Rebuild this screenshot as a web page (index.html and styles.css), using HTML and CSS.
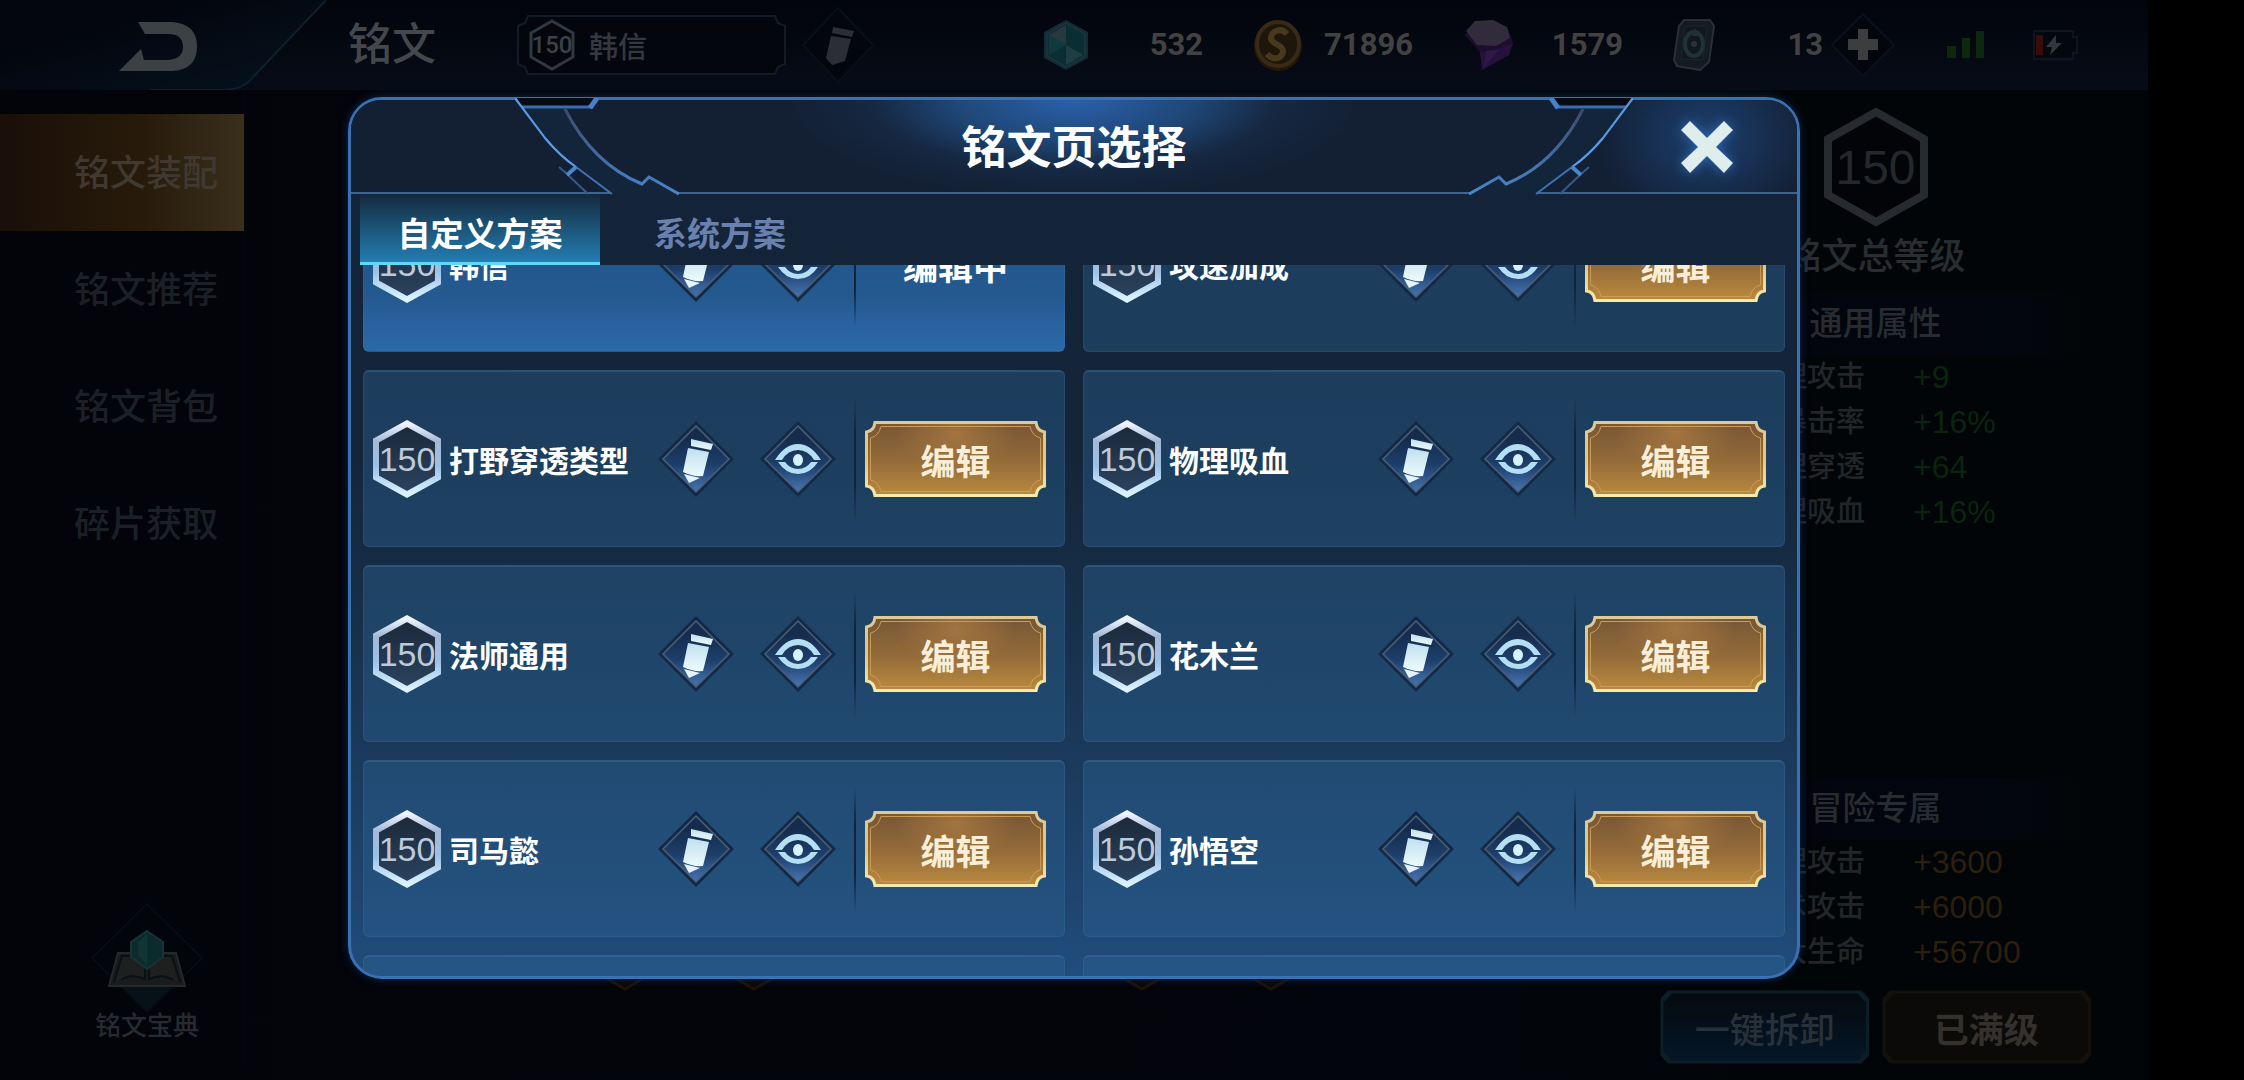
FILE: index.html
```html
<!DOCTYPE html>
<html lang="zh-CN">
<head>
    <meta charset="UTF-8">
    <meta name="viewport" content="width=device-width, initial-scale=1.0">
    <title>铭文</title>
    <link rel="stylesheet" href="styles.css">
</head>
<body>
    <!-- Shared shapes -->
    <svg class="defs" width="0" height="0" aria-hidden="true">
        <defs>
            <linearGradient id="hexStroke" x1="0" y1="0" x2="0" y2="1">
                <stop offset="0" stop-color="#f0f6ff"/>
                <stop offset=".25" stop-color="#a4b8d6"/>
                <stop offset=".6" stop-color="#9cc0e8"/>
                <stop offset="1" stop-color="#dcf4ff"/>
            </linearGradient>
            <linearGradient id="hexFill" x1="0" y1="0" x2="0" y2="1">
                <stop offset="0" stop-color="#1b2839"/>
                <stop offset="1" stop-color="#2b4460"/>
            </linearGradient>
            <linearGradient id="diamondFill" x1="0" y1="0" x2="0" y2="1">
                <stop offset=".2" stop-color="#162c4c"/>
                <stop offset=".6" stop-color="#1d3f6c"/>
                <stop offset="1" stop-color="#4676b4"/>
            </linearGradient>
            <linearGradient id="goldFill" x1="0" y1="0" x2="0" y2="1">
                <stop offset="0" stop-color="#775636"/>
                <stop offset=".5" stop-color="#926a38"/>
                <stop offset="1" stop-color="#bb8a40"/>
            </linearGradient>
            <linearGradient id="goldStroke" x1="0" y1="0" x2="0" y2="1">
                <stop offset="0" stop-color="#dccb98"/>
                <stop offset=".5" stop-color="#e2c682"/>
                <stop offset="1" stop-color="#f4eaae"/>
            </linearGradient>
            <radialGradient id="goldShine">
                <stop offset="0" stop-color="#b98446" stop-opacity=".6"/>
                <stop offset="1" stop-color="#b98446" stop-opacity="0"/>
            </radialGradient>
            <linearGradient id="iconFill" x1="0" y1="0" x2="0" y2="1">
                <stop offset="0" stop-color="#bfe0f0"/>
                <stop offset="1" stop-color="#eefafa"/>
            </linearGradient>
            <linearGradient id="lineFade" x1="0" y1="0" x2="0" y2="1">
                <stop offset="0" stop-color="#3c4a6c"/>
                <stop offset="1" stop-color="#4a86cc"/>
            </linearGradient>
            <linearGradient id="plateBlue" x1="0" y1="0" x2="0" y2="1">
                <stop offset="0" stop-color="#04090f"/>
                <stop offset="1" stop-color="#051727"/>
            </linearGradient>
            <linearGradient id="backFill" x1="0" y1="0" x2="1" y2="1">
                <stop offset=".3" stop-color="#03060e"/>
                <stop offset="1" stop-color="#06131f"/>
            </linearGradient>
        </defs>

        <symbol id="hex" viewBox="0 0 68 78">
            <path d="M34 3.500L65 20.500V57.500L34 74.500L3 57.500V20.500Z" fill="url(#hexFill)" stroke="url(#hexStroke)" stroke-width="6"/>
        </symbol>

        <symbol id="pencil" viewBox="0 0 76 76">
            <path d="M38 0L76 38L38 76L0 38Z" fill="#122a48"/>
            <path d="M38 5L71 38L38 71L5 38Z" fill="url(#diamondFill)" stroke="#4c5f76" stroke-width="1.500"/>
            <path d="M33 18L55 23L53 29L33 25Z" fill="url(#iconFill)"/>
            <path d="M30 27L51 31L45 55Q35 56 25 51Z" fill="url(#iconFill)"/>
            <path d="M26 53L42 57L31 62Z" fill="#e4f4fa"/>
        </symbol>

        <symbol id="eye" viewBox="0 0 76 76">
            <path d="M38 0L76 38L38 76L0 38Z" fill="#122a48"/>
            <path d="M38 5L71 38L38 71L5 38Z" fill="url(#diamondFill)" stroke="#4c5f76" stroke-width="1.500"/>
            <path d="M15 39Q25 23 38 23Q51 23 61 39L54 39Q48 29 38 29Q28 29 22 39Z" fill="#b4dff2"/>
            <path d="M18 41L25 41Q30 48 38 48Q46 48 51 41L58 41Q50 53 38 53Q26 53 18 41Z" fill="#b4dff2"/>
            <ellipse cx="38" cy="39" rx="5" ry="6" fill="#d6f2fc"/>
        </symbol>

        <symbol id="gold-plate" viewBox="0 0 182 76" preserveAspectRatio="none">
            <path d="M10 1.500H172Q173 10 180.500 11V65Q173 66 172 74.500H10Q9 66 1.500 65V11Q9 10 10 1.500Z" fill="url(#goldFill)"/>
            <ellipse cx="91" cy="12" rx="60" ry="40" fill="url(#goldShine)"/>
            <path d="M10 1.500H172Q173 10 180.500 11V65Q173 66 172 74.500H10Q9 66 1.500 65V11Q9 10 10 1.500Z" fill="none" stroke="url(#goldStroke)" stroke-width="3"/>
            <path d="M16 5.500H166Q168 15 176.500 17V59Q168 61 166 70.500H16Q14 61 5.500 59V17Q14 15 16 5.500Z" fill="none" stroke="#cf9c52" stroke-width="1"/>
        </symbol>

        <symbol id="plate" viewBox="0 0 210 76" preserveAspectRatio="none">
            <path d="M10 2H200L208 11V65L200 74H10L2 65V11Z" stroke-width="3"/>
            <path d="M10 2L2 11M200 2L208 11M208 65L200 74M10 74L2 65" stroke-width="5"/>
        </symbol>

        <!-- Cut in the dialog's top edge and the circuit lines below it -->
        <symbol id="corner" viewBox="0 0 180 97">
            <path d="M1 -1L8 9H76L83 -1Z" fill="#060a14"/>
            <path d="M8 9H50Q80 65 127 86L134 79L164 96H97L61 69Q30 45 8 9Z" fill="#12253a"/>
            <path d="M7 9H77" fill="none" stroke="#3a6cb0" stroke-width="3"/>
            <path d="M75 10L82 0" fill="none" stroke="#4682cc" stroke-width="5"/>
            <path d="M0 0L30 40Q45 58 61 69L97 96" fill="none" stroke="#3f72b4" stroke-width="2"/>
            <path d="M0 0L30 40Q45 58 61 69" fill="none" stroke="#5a9ae0" stroke-width="2"/>
            <path d="M50 11Q78 66 127 86L134 79L164 96" fill="none" stroke="url(#lineFade)" stroke-width="3"/>
            <path d="M44 69L52 76L73 96" fill="none" stroke="#345a8c" stroke-width="2"/>
            <path d="M61 69L52 77" fill="none" stroke="#4a86cc" stroke-width="4"/>
        </symbol>
    </svg>

    <div class="game">
        <header class="topbar">
            <button class="back" aria-label="返回">
                <svg viewBox="0 0 348 90">
                    <path d="M0 0H326L254 76Q244 90 222 90H0Z" fill="url(#backFill)"/>
                    <path d="M326 0L254 76Q244 90 222 90H150" fill="none" stroke="#0c212d" stroke-width="2"/>
                    <path d="M138 22H172Q197 24 197 46Q197 70 172 71H119L141 49L144 60H168Q183 59 183 47Q183 34 168 34H145Z" fill="#3c4145"/>
                </svg>
            </button>
            <h1>铭文</h1>
            <button class="page-picker">
                <svg class="page-picker-bg" viewBox="0 0 269 60" preserveAspectRatio="none" aria-hidden="true">
                    <path d="M11 1H258L261 8L268 11V49L261 52L258 59H11L8 52L1 49V11L8 8Z" fill="#03060d" stroke="#131c26" stroke-width="2"/>
                </svg>
                <span class="page-picker-text">
                    <span class="badge-small">
                        <svg viewBox="0 0 46 52"><path d="M23 2L44 14V38L23 50L2 38V14Z" fill="none" stroke="#32383f" stroke-width="3"/></svg>
                        <span>150</span>
                    </span>
                    韩信
                </span>
            </button>
            <button class="rename" aria-label="重命名">
                <svg viewBox="0 0 74 80">
                    <path d="M37 3L72 40L37 77L2 40Z" fill="#03060c" stroke="#090f17" stroke-width="2"/>
                    <path d="M32 22L53 26L51 32L31 28ZM30 31L50 34L44 56L31 60L25 53Z" fill="#2b2f34"/>
                </svg>
            </button>

            <ul class="resources">
                <li>
                    <svg viewBox="0 0 46 52">
                        <path d="M23 1L45 13V39L23 51L1 39V13Z" fill="#152a33"/>
                        <path d="M23 4L42 15V37L23 48L4 37V15Z" fill="#0b2e35" stroke="#233a42"/>
                        <path d="M23 6L23 26L6 16Z" fill="#25393f"/>
                        <path d="M6 16L23 26L6 36Z" fill="#0f3a3f"/>
                        <path d="M23 26L40 36L23 46Z" fill="#1e3e43"/>
                    </svg>
                    <span>532</span>
                </li>
                <li>
                    <svg viewBox="0 0 50 52">
                        <ellipse cx="25" cy="27" rx="24" ry="25" fill="#22180a"/>
                        <ellipse cx="25" cy="25" rx="21" ry="22" fill="#1d160b" stroke="#382a15" stroke-width="4"/>
                        <path d="M34 15Q28 8 20 14Q14 21 25 26Q34 31 27 38Q20 42 14 35" fill="none" stroke="#49391c" stroke-width="6"/>
                    </svg>
                    <span>71896</span>
                </li>
                <li>
                    <svg viewBox="0 0 50 52">
                        <path d="M1 15L17 33L19 51L46 36L50 24L44 8Z" fill="#1d0e30"/>
                        <path d="M17 33L34 30L50 24L46 36L19 51Z" fill="#25113b"/>
                        <path d="M23 32L36 31L20 50Z" fill="#2f1846"/>
                        <path d="M3 12L12 2L30 1L44 8L47 19L33 27L14 26Z" fill="#312b3c"/>
                    </svg>
                    <span>1579</span>
                </li>
                <li class="resource-cards">
                    <svg viewBox="0 0 42 52">
                        <path d="M11 1H37L41 7L36 43L27 51L4 47L1 41L6 7Z" fill="#141b22" stroke="#282f36" stroke-width="2"/>
                        <path d="M12 7L34 7L30 41L8 40Z" fill="#111820" stroke="#1c252d"/>
                        <ellipse cx="21" cy="25" rx="9" ry="12" fill="none" stroke="#203235" stroke-width="4"/>
                        <path d="M22 9L25 17H19Z" fill="#203235"/>
                        <circle cx="21" cy="25" r="3" fill="#26333e"/>
                    </svg>
                    <span>13</span>
                </li>
            </ul>
            <button class="add" aria-label="增加">
                <svg viewBox="0 0 64 64">
                    <path d="M32 1L63 32L32 63L1 32Z" fill="#03070d" stroke="#0b1119" stroke-width="2"/>
                    <path d="M27 16H37V26H47V37H37V47H27V37H17V26H27Z" fill="#3c3d3e"/>
                </svg>
            </button>
            <svg class="signal" viewBox="0 0 38 28">
                <path d="M0 15H9V27H0ZM15 7H23V27H15ZM29 0H37V27H29Z" fill="#0c2910"/>
            </svg>
            <svg class="battery" viewBox="0 0 46 30">
                <path d="M1 1H40V7H44V23H40V29H1Z" fill="#03070e" stroke="#0e141c" stroke-width="2"/>
                <path d="M3 5H10V25H3Z" fill="#370c0a"/>
                <path d="M23 5L13 17H19L17 25L29 13H23Z" fill="#33363b"/>
            </svg>
        </header>

        <aside class="sidebar">
            <nav>
                <a class="active" href="#">铭文装配</a>
                <a href="#">铭文推荐</a>
                <a href="#">铭文背包</a>
                <a href="#">碎片获取</a>
            </nav>
            <a class="codex" href="#">
                <svg viewBox="0 0 112 110">
                    <path d="M56 1L111 55L56 109L1 55Z" fill="#02050a" stroke="#070c12" stroke-width="2"/>
                    <path d="M30 83H82L56 108Z" fill="#07111a"/>
                    <path d="M27 50H85L94 83H18Z" fill="#191b1d" stroke="#24292c" stroke-width="2"/>
                    <path d="M23 79L31 53H54V76Q40 70 30 77M89 79L81 53H58V76Q72 70 82 77" fill="#1e1f1f" stroke="#0b1015" stroke-width="2"/>
                    <path d="M56 28L72 39V54L56 66L40 54V39Z" fill="#0b2b2d" stroke="#1a3235" stroke-width="2"/>
                    <path d="M56 30L47 40V52L56 62Z" fill="#123636"/>
                </svg>
                铭文宝典
            </a>
        </aside>

        <main class="board">
            <div class="slots">
                <svg viewBox="0 0 46 52"><path d="M23 2L44 14V38L23 50L2 38V14Z"/></svg>
                <svg viewBox="0 0 46 52"><path d="M23 2L44 14V38L23 50L2 38V14Z"/></svg>
                <svg class="slot-empty" viewBox="0 0 46 52"><path d="M23 2L44 14V38L23 50L2 38V14Z"/></svg>
                <svg class="slot-empty" viewBox="0 0 46 52"><path d="M23 2L44 14V38L23 50L2 38V14Z"/></svg>
                <svg viewBox="0 0 46 52"><path d="M23 2L44 14V38L23 50L2 38V14Z"/></svg>
                <svg viewBox="0 0 46 52"><path d="M23 2L44 14V38L23 50L2 38V14Z"/></svg>
            </div>
        </main>

        <section class="stats">
            <div class="level">
                <svg viewBox="0 0 104 120"><path d="M52 5L100 32V88L52 115L4 88V32Z" fill="#020408" stroke="#262b30" stroke-width="8"/></svg>
                <span>150</span>
            </div>
            <h2>铭文总等级</h2>
            <h3>通用属性</h3>
            <dl class="stat-list green">
                <dt>物理攻击</dt><dd>+9</dd>
                <dt>暴击率</dt><dd>+16%</dd>
                <dt>物理穿透</dt><dd>+64</dd>
                <dt>物理吸血</dt><dd>+16%</dd>
            </dl>
            <h3 class="adventure">冒险专属</h3>
            <dl class="stat-list orange">
                <dt>物理攻击</dt><dd>+3600</dd>
                <dt>法术攻击</dt><dd>+6000</dd>
                <dt>最大生命</dt><dd>+56700</dd>
            </dl>
            <div class="stats-actions">
                <button class="plate-btn plate-blue"><svg aria-hidden="true"><use href="#plate"/></svg><span>一键拆卸</span></button>
                <button class="plate-btn plate-brown"><svg aria-hidden="true"><use href="#plate"/></svg><span>已满级</span></button>
            </div>
        </section>

        <!-- Page selection dialog -->
        <div class="overlay">
            <section class="modal" role="dialog" aria-labelledby="modalTitle">
                <header class="modal-header">
                    <h2 id="modalTitle">铭文页选择</h2>
                    <button class="close" aria-label="关闭">
                        <svg viewBox="0 0 54 54"><path d="M10 1L27 18L44 1L53 10L36 27L53 43L44 53L27 36L10 53L1 43L18 27L1 10Z" fill="#dfeeed"/></svg>
                    </button>
                </header>
                <svg class="corner corner-left" aria-hidden="true"><use href="#corner"/></svg>
                <svg class="corner corner-right" aria-hidden="true"><use href="#corner"/></svg>
                <div class="tabs" role="tablist">
                    <button class="tab active" role="tab" aria-selected="true">自定义方案</button>
                    <button class="tab" role="tab" aria-selected="false">系统方案</button>
                </div>
                <div class="page-list" id="pageList">
                    <article class="card current">
                        <div class="badge"><svg><use href="#hex"/></svg><span>150</span></div>
                        <h3>韩信</h3>
                        <button class="icon-btn" aria-label="重命名"><svg><use href="#pencil"/></svg></button>
                        <button class="icon-btn" aria-label="查看"><svg><use href="#eye"/></svg></button>
                        <div class="card-action"><strong>编辑中</strong></div>
                    </article>
                    <article class="card">
                        <div class="badge"><svg><use href="#hex"/></svg><span>150</span></div>
                        <h3>攻速加成</h3>
                        <button class="icon-btn" aria-label="重命名"><svg><use href="#pencil"/></svg></button>
                        <button class="icon-btn" aria-label="查看"><svg><use href="#eye"/></svg></button>
                        <div class="card-action"><button class="edit-btn"><svg aria-hidden="true"><use href="#gold-plate"/></svg><span>编辑</span></button></div>
                    </article>
                    <article class="card">
                        <div class="badge"><svg><use href="#hex"/></svg><span>150</span></div>
                        <h3>打野穿透类型</h3>
                        <button class="icon-btn" aria-label="重命名"><svg><use href="#pencil"/></svg></button>
                        <button class="icon-btn" aria-label="查看"><svg><use href="#eye"/></svg></button>
                        <div class="card-action"><button class="edit-btn"><svg aria-hidden="true"><use href="#gold-plate"/></svg><span>编辑</span></button></div>
                    </article>
                    <article class="card">
                        <div class="badge"><svg><use href="#hex"/></svg><span>150</span></div>
                        <h3>物理吸血</h3>
                        <button class="icon-btn" aria-label="重命名"><svg><use href="#pencil"/></svg></button>
                        <button class="icon-btn" aria-label="查看"><svg><use href="#eye"/></svg></button>
                        <div class="card-action"><button class="edit-btn"><svg aria-hidden="true"><use href="#gold-plate"/></svg><span>编辑</span></button></div>
                    </article>
                    <article class="card">
                        <div class="badge"><svg><use href="#hex"/></svg><span>150</span></div>
                        <h3>法师通用</h3>
                        <button class="icon-btn" aria-label="重命名"><svg><use href="#pencil"/></svg></button>
                        <button class="icon-btn" aria-label="查看"><svg><use href="#eye"/></svg></button>
                        <div class="card-action"><button class="edit-btn"><svg aria-hidden="true"><use href="#gold-plate"/></svg><span>编辑</span></button></div>
                    </article>
                    <article class="card">
                        <div class="badge"><svg><use href="#hex"/></svg><span>150</span></div>
                        <h3>花木兰</h3>
                        <button class="icon-btn" aria-label="重命名"><svg><use href="#pencil"/></svg></button>
                        <button class="icon-btn" aria-label="查看"><svg><use href="#eye"/></svg></button>
                        <div class="card-action"><button class="edit-btn"><svg aria-hidden="true"><use href="#gold-plate"/></svg><span>编辑</span></button></div>
                    </article>
                    <article class="card">
                        <div class="badge"><svg><use href="#hex"/></svg><span>150</span></div>
                        <h3>司马懿</h3>
                        <button class="icon-btn" aria-label="重命名"><svg><use href="#pencil"/></svg></button>
                        <button class="icon-btn" aria-label="查看"><svg><use href="#eye"/></svg></button>
                        <div class="card-action"><button class="edit-btn"><svg aria-hidden="true"><use href="#gold-plate"/></svg><span>编辑</span></button></div>
                    </article>
                    <article class="card">
                        <div class="badge"><svg><use href="#hex"/></svg><span>150</span></div>
                        <h3>孙悟空</h3>
                        <button class="icon-btn" aria-label="重命名"><svg><use href="#pencil"/></svg></button>
                        <button class="icon-btn" aria-label="查看"><svg><use href="#eye"/></svg></button>
                        <div class="card-action"><button class="edit-btn"><svg aria-hidden="true"><use href="#gold-plate"/></svg><span>编辑</span></button></div>
                    </article>
                    <article class="card"></article>
                    <article class="card"></article>
                </div>
            </section>
        </div>
    </div>

    <script>
        // Open the list half a row down, with the current page still in view
        document.getElementById('pageList').scrollTop = 90;
    </script>
</body>
</html>
```
FILE: styles.css
```css
* {
    box-sizing: border-box;
}

body {
    margin: 0;
    background: #000;
    color: #fff;
    font-family: "Liberation Sans", "Noto Sans CJK SC", sans-serif;
}

h1, h2, h3, ul, dl, dd {
    margin: 0;
    padding: 0;
    font-weight: 500;
}

button {
    margin: 0;
    padding: 0;
    border: none;
    background: none;
    color: inherit;
    font-family: inherit;
    cursor: pointer;
}

a {
    color: inherit;
    text-decoration: none;
}

svg {
    display: block;
}

.defs {
    position: absolute;
}

.game {
    position: relative;
    display: grid;
    grid-template-columns: 245px 1fr 431px;
    grid-template-rows: 90px 1fr;
    height: 100vh;
    min-height: 900px;
    margin-right: 96px;
    padding-right: 57px;
    background: linear-gradient(90deg, #02040a, #02050b 70%, #010507 85%);
}

/* Top bar */
.topbar {
    grid-column: 1 / -1;
    display: flex;
    align-items: center;
    margin-right: -57px;
    padding-right: 69px;
    background: linear-gradient(#02040b, #060c17);
    border-bottom: 1px solid #080f18;
}

.back svg {
    width: 348px;
    height: 90px;
}

.topbar h1 {
    font-size: 44px;
    line-height: 60px;
    color: #44484d;
}

.page-picker {
    display: grid;
    width: 269px;
    height: 60px;
    margin-left: 81px;
    font-size: 29px;
    font-weight: 500;
    color: #34393f;
}

.page-picker > * {
    grid-area: 1 / 1;
}

.page-picker-bg {
    width: 100%;
    height: 60px;
}

.page-picker-text {
    display: flex;
    align-items: center;
    gap: 14px;
    padding-left: 12px;
}

.badge-small {
    display: grid;
    place-items: center;
    font-family: Roboto, sans-serif;
    font-size: 24px;
    color: #3c4147;
}

.badge-small > * {
    grid-area: 1 / 1;
}

.badge-small svg {
    width: 46px;
}

.rename {
    margin-left: 15px;
}

.rename svg {
    width: 74px;
    height: 80px;
}

.resources {
    display: flex;
    gap: 50px;
    margin-left: auto;
    list-style: none;
    font-family: Roboto, sans-serif;
    font-size: 31px;
    font-weight: 700;
    color: #434242;
}

.resources li {
    display: flex;
    align-items: center;
    justify-content: space-between;
    width: 160px;
}

.resources svg {
    height: 52px;
}

.resources .resource-cards {
    width: 150px;
}

.add {
    margin-left: 8px;
}

.add svg {
    width: 64px;
}

.signal {
    width: 38px;
    margin-left: 52px;
}

.battery {
    width: 46px;
    margin-left: 48px;
}

/* Left menu */
.sidebar {
    display: flex;
    flex-direction: column;
    margin-bottom: 17px;
    padding: 24px 0;
    border-right: 1px solid #04080e;
}

.sidebar nav a {
    display: block;
    padding: 2px 0 0 74px;
    font-size: 36px;
    font-weight: 500;
    line-height: 115px;
    color: #1b2026;
}

.sidebar nav .active {
    background: linear-gradient(90deg, #1a0f08, #281b0b 60%, #3a2f1b);
    color: #3f3931;
}

.codex {
    display: flex;
    flex-direction: column;
    align-items: center;
    align-self: flex-start;
    margin-top: auto;
    padding-left: 91px;
    font-size: 26px;
    font-weight: 500;
    line-height: 26px;
    color: #272b31;
}

.codex svg {
    width: 112px;
}

/* Rune board behind the dialog */
.board {
    display: flex;
    align-items: flex-end;
    padding: 0 366px 89px 357px;
}

.slots {
    display: flex;
    flex: 1;
    justify-content: space-between;
}

.slots svg {
    width: 46px;
    fill: #0a0603;
    stroke: #201205;
    stroke-width: 3;
}

.slots .slot-empty {
    fill: none;
    stroke: none;
}

/* Attributes */
.stats {
    display: flex;
    flex-direction: column;
    padding: 17px 0 16px;
    text-align: center;
}

.level {
    display: grid;
    place-items: center;
    font-size: 48px;
    color: #24282d;
}

.level > * {
    grid-area: 1 / 1;
}

.level svg {
    width: 104px;
}

.stats h2 {
    padding-top: 2px;
    font-size: 36px;
    line-height: 56px;
    color: #282d32;
}

.stats h3 {
    margin-top: 8px;
    background: linear-gradient(90deg, #02040b, #03060f 75%, transparent);
    font-size: 33px;
    line-height: 62px;
    color: #272c31;
}

.stats .adventure {
    margin-top: auto;
}

.stat-list {
    display: grid;
    grid-template-columns: 205px 1fr;
    column-gap: 48px;
    line-height: 45px;
}

.stat-list dt {
    font-size: 29px;
    text-align: right;
    color: #212629;
}

.stat-list dd {
    font-size: 32px;
    text-align: left;
}

.green dd {
    color: #0b2410;
}

.orange dd {
    color: #2d1f0d;
}

.stats-actions {
    display: grid;
    grid-template-columns: 1fr 1fr;
    gap: 12px;
    margin-top: 15px;
}

.plate-btn {
    display: grid;
    place-items: center;
    font-size: 35px;
    font-weight: 500;
}

.plate-btn > * {
    grid-area: 1 / 1;
}

.plate-btn svg {
    width: 100%;
    height: 74px;
}

.plate-blue {
    color: #27313a;
}

.plate-blue svg {
    fill: url(#plateBlue);
    stroke: #0c1f29;
}

.plate-brown {
    color: #34312c;
    font-weight: 700;
}

.plate-brown svg {
    fill: #0b0a09;
    stroke: #14110d;
}

/* Dialog */
.overlay {
    position: absolute;
    inset: 0;
    padding: 97px 348px 101px;
}

.modal {
    position: relative;
    display: flex;
    flex-direction: column;
    height: 100%;
    border: 3px solid #3a70b4;
    border-radius: 34px;
    background: linear-gradient(#132338, #142539 40%, #17304a 60%, #1f4570 92%, #204d7c);
    box-shadow: 0 0 8px #0c2a50;
}

.modal-header {
    display: grid;
    grid-template-columns: 180px 1fr 180px;
    align-items: center;
    height: 94px;
    padding-top: 2px;
    border-bottom: 2px solid #3c6596;
    border-radius: 30px 30px 0 0;
    background:
        radial-gradient(ellipse 290px 100px at 50% 0, #2b60ac, #1f4878 40%, rgba(24, 48, 80, 0.5) 70%, transparent),
        radial-gradient(ellipse 110px 90px at calc(100% - 90px) 40%, #1c4070, transparent),
        #131f33;
}

.modal-header h2 {
    grid-column: 2;
    padding-top: 4px;
    font-size: 45px;
    font-weight: 700;
    line-height: 60px;
    text-align: center;
}

.close {
    justify-self: center;
}

.close svg {
    width: 54px;
    filter: drop-shadow(0 0 6px #2f6ab4);
}

.corner {
    position: absolute;
    top: -2px;
    width: 180px;
    height: 97px;
    overflow: visible;
}

.corner use {
    overflow: visible;
}

.corner-left {
    left: 164px;
}

.corner-right {
    right: 164px;
    transform: scaleX(-1);
}

.tabs {
    display: flex;
    height: 71px;
    padding-left: 9px;
}

.tab {
    width: 240px;
    padding-top: 8px;
    border-bottom: 3px solid transparent;
    font-size: 33px;
    font-weight: 700;
    color: #6a80ae;
}

.tab.active {
    border-color: #62d8f6;
    background: linear-gradient(#14293d, #1c5478 50%, #227db2);
    color: #fff;
}

.page-list {
    display: grid;
    grid-template-columns: 1fr 1fr;
    grid-auto-rows: 177px;
    gap: 18px;
    flex: 1;
    min-height: 0;
    padding: 0 12px;
    overflow-y: auto;
    scrollbar-width: none;
    border-radius: 0 0 30px 30px;
}

.card {
    display: flex;
    align-items: center;
    padding: 0 18px 0 9px;
    border: 1px solid rgba(80, 130, 180, 0.2);
    border-top: 2px solid rgba(80, 130, 180, 0.3);
    border-radius: 6px;
    background: rgba(42, 98, 145, 0.42);
}

.card.current {
    background: linear-gradient(#20508c, #245a90 70%, #2a62a0 85%, #2a6aa6);
}

.badge {
    display: grid;
    place-items: center;
    font-size: 34px;
    color: #bccadb;
}

.badge > * {
    grid-area: 1 / 1;
}

.badge svg {
    width: 68px;
    height: 78px;
}

.card h3 {
    flex: 1;
    padding-left: 8px;
    font-size: 30px;
    font-weight: 700;
    white-space: nowrap;
}

.icon-btn {
    margin-right: 26px;
}

.icon-btn svg {
    width: 76px;
    height: 76px;
}

.card-action {
    display: grid;
    align-items: center;
    width: 192px;
    height: 124px;
    margin-left: -8px;
    padding-left: 9px;
    border-left: 2px solid;
    border-image: linear-gradient(transparent, #10253c 30%, #10253c 70%, transparent) 1;
}

.card-action strong {
    font-size: 35px;
    font-weight: 700;
    text-align: center;
}

.edit-btn {
    display: grid;
    place-items: center;
    font-size: 35px;
    font-weight: 700;
    color: #fbeed8;
}

.edit-btn > * {
    grid-area: 1 / 1;
}

.edit-btn svg {
    width: 100%;
    height: 76px;
}
```
